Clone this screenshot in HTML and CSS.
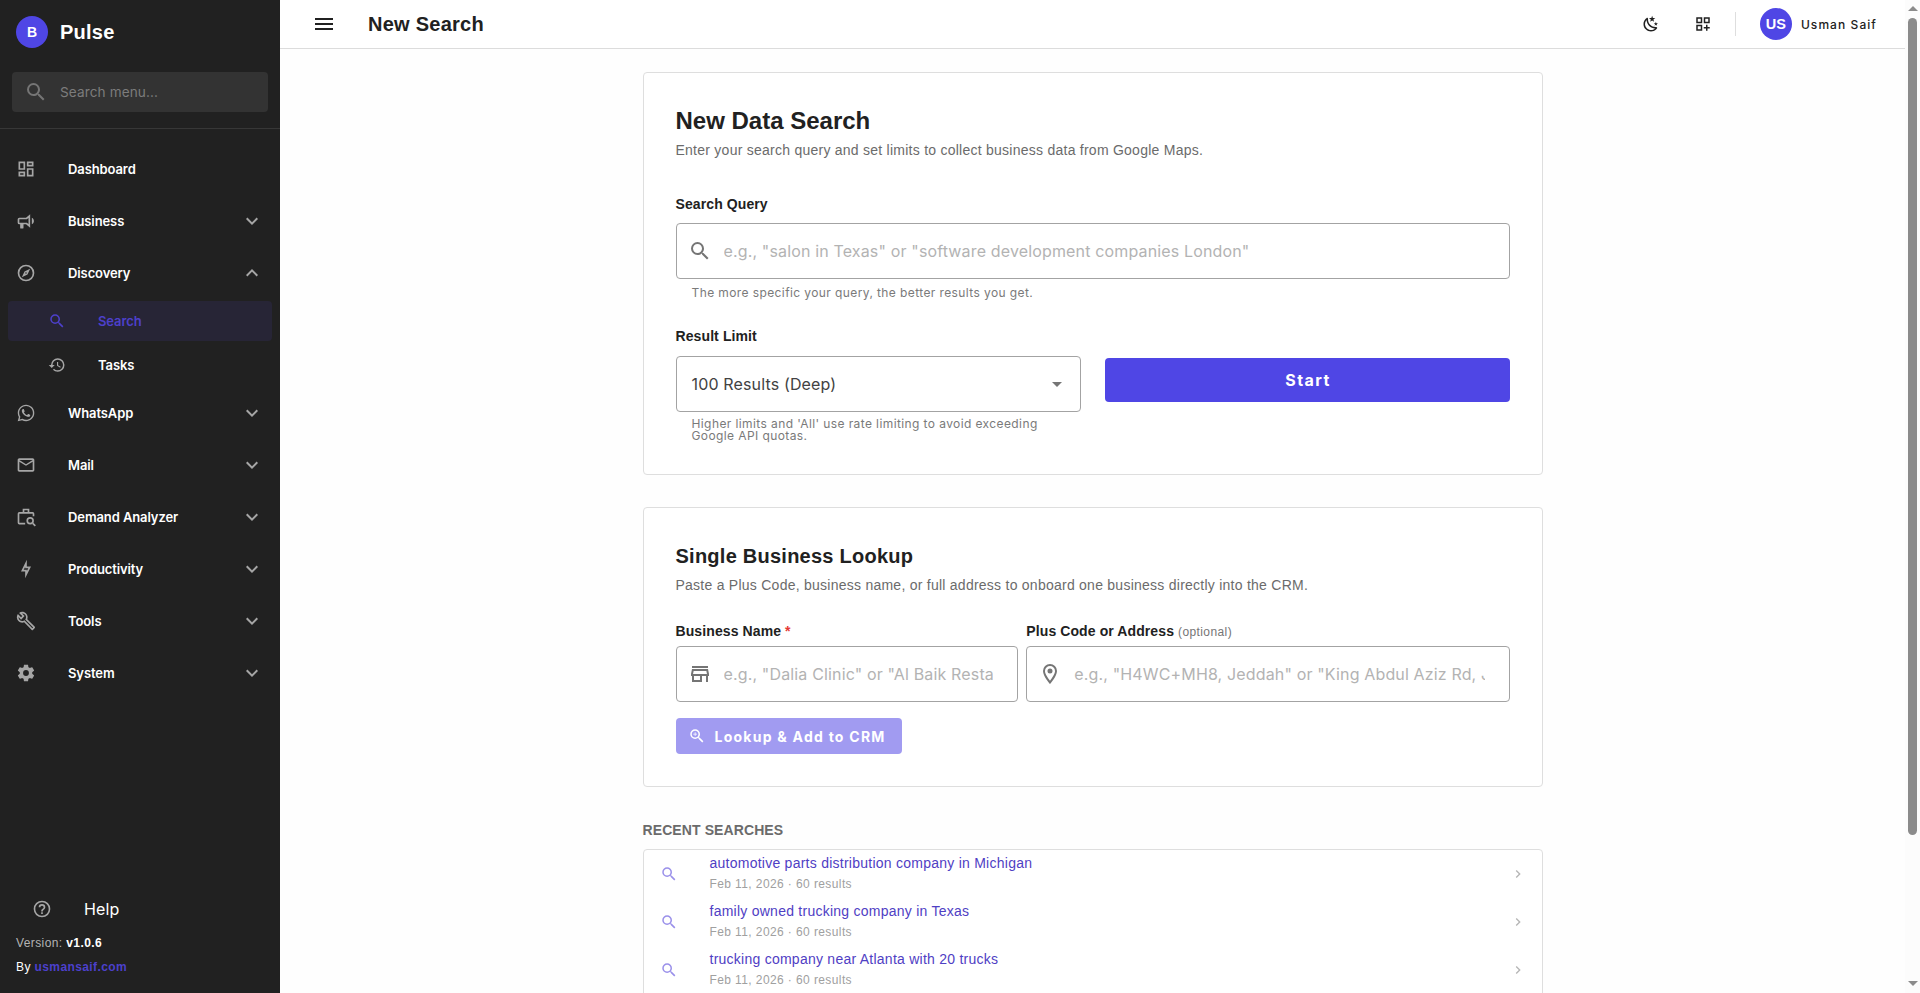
FILE: index.html
```html
<!DOCTYPE html>
<html lang="en">
<head>
  <meta charset="UTF-8">
  <meta name="viewport" content="width=device-width, initial-scale=1.0">
  <title>New Search - Pulse</title>
  <link rel="stylesheet" href="styles.css">
</head>
<body>
  <svg class="sprite">
    <symbol id="magnify" viewBox="0 0 24 24"><path d="M9.5,3A6.5,6.5 0 0,1 16,9.5C16,11.11 15.41,12.59 14.44,13.73L14.71,14H15.5L20.5,19L19,20.5L14,15.5V14.71L13.73,14.44C12.59,15.41 11.11,16 9.5,16A6.5,6.5 0 0,1 3,9.5A6.5,6.5 0 0,1 9.5,3M9.5,5C7,5 5,7 5,9.5C5,12 7,14 9.5,14C12,14 14,12 14,9.5C14,7 12,5 9.5,5Z"/></symbol>
    <symbol id="magnify-plus" viewBox="0 0 24 24"><path d="M9.5,3A6.5,6.5 0 0,1 16,9.5C16,11.11 15.41,12.59 14.44,13.73L14.71,14H15.5L20.5,19L19,20.5L14,15.5V14.71L13.73,14.44C12.59,15.41 11.11,16 9.5,16A6.5,6.5 0 0,1 3,9.5A6.5,6.5 0 0,1 9.5,3M9.5,5C7,5 5,7 5,9.5C5,12 7,14 9.5,14C12,14 14,12 14,9.5C14,7 12,5 9.5,5Z"/><path d="M7,9H9V7H10V9H12V10H10V12H9V10H7V9Z"/></symbol>
    <symbol id="dashboard" viewBox="0 0 24 24"><path d="M19,5V7H15V5H19M9,5V11H5V5H9M19,13V19H15V13H19M9,17V19H5V17H9M21,3H13V9H21V3M11,3H3V13H11V3M21,11H13V21H21V11M11,15H3V21H11V15Z"/></symbol>
    <symbol id="bullhorn" viewBox="0 0 24 24"><path d="M12,8H4A2,2 0 0,0 2,10V14A2,2 0 0,0 4,16H5V20A1,1 0 0,0 6,21H8A1,1 0 0,0 9,20V16H12L17,20V4L12,8M15,15.6L13,14H4V10H13L15,8.4V15.6M21.5,12C21.5,13.71 20.54,15.26 19,16V8C20.53,8.75 21.5,10.3 21.5,12Z"/></symbol>
    <symbol id="compass" viewBox="0 0 24 24"><path d="M7,17L10.2,10.2L17,7L13.8,13.8L7,17M12,11.1A0.9,0.9 0 0,0 11.1,12A0.9,0.9 0 0,0 12,12.9A0.9,0.9 0 0,0 12.9,12A0.9,0.9 0 0,0 12,11.1M12,2A10,10 0 0,1 22,12A10,10 0 0,1 12,22A10,10 0 0,1 2,12A10,10 0 0,1 12,2M12,4A8,8 0 0,0 4,12A8,8 0 0,0 12,20A8,8 0 0,0 20,12A8,8 0 0,0 12,4Z"/></symbol>
    <symbol id="history" viewBox="0 0 24 24"><path d="M13.5,8H12V13L16.28,15.54L17,14.33L13.5,12.25V8M13,3A9,9 0 0,0 4,12H1L4.96,16.03L9,12H6A7,7 0 0,1 13,5A7,7 0 0,1 20,12A7,7 0 0,1 13,19C11.07,19 9.32,18.21 8.06,16.94L6.64,18.36C8.27,20 10.5,21 13,21A9,9 0 0,0 22,12A9,9 0 0,0 13,3"/></symbol>
    <symbol id="whatsapp" viewBox="0 0 24 24"><path d="M12.04 2C6.58 2 2.13 6.45 2.13 11.91C2.13 13.66 2.59 15.36 3.45 16.86L2.05 22L7.3 20.62C8.75 21.41 10.38 21.83 12.04 21.83C17.5 21.83 21.95 17.38 21.95 11.92C21.95 9.27 20.92 6.78 19.05 4.91C17.18 3.03 14.69 2 12.04 2M12.05 3.67C14.25 3.67 16.31 4.53 17.87 6.09C19.42 7.65 20.28 9.72 20.28 11.92C20.28 16.46 16.58 20.15 12.04 20.15C10.56 20.15 9.11 19.76 7.85 19L7.55 18.83L4.43 19.65L5.26 16.61L5.06 16.29C4.24 15 3.8 13.47 3.8 11.91C3.81 7.37 7.5 3.67 12.05 3.67M8.53 7.33C8.37 7.33 8.1 7.39 7.87 7.64C7.65 7.89 7 8.5 7 9.71C7 10.93 7.89 12.1 8 12.27C8.14 12.44 9.76 14.94 12.25 16C12.84 16.27 13.3 16.42 13.66 16.53C14.25 16.72 14.79 16.69 15.22 16.63C15.7 16.56 16.68 16.03 16.89 15.45C17.1 14.87 17.1 14.38 17.04 14.27C16.97 14.17 16.81 14.11 16.56 14C16.31 13.86 15.09 13.26 14.87 13.18C14.64 13.1 14.5 13.06 14.31 13.3C14.15 13.55 13.67 14.11 13.53 14.27C13.38 14.44 13.24 14.46 13 14.34C12.74 14.21 11.94 13.95 11 13.11C10.26 12.45 9.77 11.64 9.62 11.39C9.5 11.15 9.61 11 9.73 10.89C9.84 10.78 10 10.6 10.1 10.45C10.23 10.31 10.27 10.2 10.35 10.04C10.43 9.87 10.39 9.73 10.33 9.61C10.27 9.5 9.77 8.26 9.56 7.77C9.36 7.29 9.16 7.35 9 7.34C8.86 7.34 8.7 7.33 8.53 7.33Z"/></symbol>
    <symbol id="email" viewBox="0 0 24 24"><path d="M22 6C22 4.9 21.1 4 20 4H4C2.9 4 2 4.9 2 6V18C2 19.1 2.9 20 4 20H20C21.1 20 22 19.1 22 18V6M20 6L12 11L4 6H20M20 18H4V8L12 13L20 8V18Z"/></symbol>
    <symbol id="briefcase-search" viewBox="0 0 24 24"><path fill="none" stroke="currentColor" stroke-width="2" d="M11,20H4A1,1 0 0,1 3,19V8A1,1 0 0,1 4,7H20A1,1 0 0,1 21,8V11M9,7V3H15V7"/><circle cx="17" cy="16.5" r="3.5" fill="none" stroke="currentColor" stroke-width="2"/><path d="M19.4,20.3L20.8,18.9L23.9,22L22.5,23.4Z"/></symbol>
    <symbol id="bolt" viewBox="0 0 24 24"><path d="M11 9.47V11H14.76L13 14.53V13H9.24L11 9.47M13 1L6 15H11V23L18 9H13V1Z"/></symbol>
    <symbol id="wrench" viewBox="0 0 24 24"><path d="M22.61,19L13.53,9.91C14.46,7.57 14,4.81 12.09,2.91C9.79,0.61 6.21,0.4 3.66,2.26L7.5,6.11L6.08,7.52L2.25,3.69C0.39,6.23 0.6,9.82 2.9,12.11C4.76,13.97 7.47,14.46 9.79,13.59L18.9,22.7C19.29,23.09 19.92,23.09 20.31,22.7L22.61,20.4C23,20 23,19.39 22.61,19M19.61,20.59L10.15,11.13C9.54,11.58 8.86,11.85 8.15,11.95C6.79,12.15 5.36,11.74 4.32,10.7C3.37,9.76 2.93,8.5 3,7.26L6.09,10.35L10.33,6.11L7.24,3C8.48,2.95 9.73,3.39 10.68,4.33C11.76,5.41 12.17,6.9 11.92,8.29C11.8,9 11.5,9.66 11.04,10.25L20.5,19.7L19.61,20.59Z"/></symbol>
    <symbol id="cog" viewBox="0 0 24 24"><path d="M12,15.5A3.5,3.5 0 0,1 8.5,12A3.5,3.5 0 0,1 12,8.5A3.5,3.5 0 0,1 15.5,12A3.5,3.5 0 0,1 12,15.5M19.43,12.97C19.47,12.65 19.5,12.33 19.5,12C19.5,11.67 19.47,11.34 19.43,11L21.54,9.37C21.73,9.22 21.78,8.95 21.66,8.73L19.66,5.27C19.54,5.05 19.27,4.96 19.05,5.05L16.56,6.05C16.04,5.66 15.5,5.32 14.87,5.07L14.5,2.42C14.46,2.18 14.25,2 14,2H10C9.75,2 9.54,2.18 9.5,2.42L9.13,5.07C8.5,5.32 7.96,5.66 7.44,6.05L4.95,5.05C4.73,4.96 4.46,5.05 4.34,5.27L2.34,8.73C2.21,8.95 2.27,9.22 2.46,9.37L4.57,11C4.53,11.34 4.5,11.67 4.5,12C4.5,12.33 4.53,12.65 4.57,12.97L2.46,14.63C2.27,14.78 2.21,15.05 2.34,15.27L4.34,18.73C4.46,18.95 4.73,19.03 4.95,18.95L7.44,17.94C7.96,18.34 8.5,18.68 9.13,18.93L9.5,21.58C9.54,21.82 9.75,22 10,22H14C14.25,22 14.46,21.82 14.5,21.58L14.87,18.93C15.5,18.67 16.04,18.34 16.56,17.94L19.05,18.95C19.27,19.03 19.54,18.95 19.66,18.73L21.66,15.27C21.78,15.05 21.73,14.78 21.54,14.63L19.43,12.97Z"/></symbol>
    <symbol id="help" viewBox="0 0 24 24"><path d="M11,18H13V16H11V18M12,2A10,10 0 0,0 2,12A10,10 0 0,0 12,22A10,10 0 0,0 22,12A10,10 0 0,0 12,2M12,20C7.59,20 4,16.41 4,12C4,7.59 7.59,4 12,4C16.41,4 20,7.59 20,12C20,16.41 16.41,20 12,20M12,6A4,4 0 0,0 8,10H10A2,2 0 0,1 12,8A2,2 0 0,1 14,10C14,12 11,11.75 11,15H13C13,12.75 16,12.5 16,10A4,4 0 0,0 12,6Z"/></symbol>
    <symbol id="menu" viewBox="0 0 24 24"><path d="M3,6H21V8H3V6M3,11H21V13H3V11M3,16H21V18H3V16Z"/></symbol>
    <symbol id="chevron-down" viewBox="0 0 24 24"><path d="M7.41,8.58L12,13.17L16.59,8.58L18,10L12,16L6,10L7.41,8.58Z"/></symbol>
    <symbol id="chevron-up" viewBox="0 0 24 24"><path d="M7.41,15.41L12,10.83L16.59,15.41L18,14L12,8L6,14L7.41,15.41Z"/></symbol>
    <symbol id="chevron-right" viewBox="0 0 24 24"><path d="M8.59,16.58L13.17,12L8.59,7.41L10,6L16,12L10,18L8.59,16.58Z"/></symbol>
    <symbol id="menu-down" viewBox="0 0 24 24"><path d="M7,10L12,15L17,10H7Z"/></symbol>
    <symbol id="night" viewBox="0 0 24 24"><path d="M17.75,4.09L15.22,6.03L16.13,9.09L13.5,7.28L10.87,9.09L11.78,6.03L9.25,4.09L12.44,4L13.5,1L14.56,4L17.75,4.09M21.25,11L19.61,12.25L20.2,14.23L18.5,13.06L16.8,14.23L17.39,12.25L15.75,11L17.81,10.95L18.5,9L19.19,10.95L21.25,11M18.97,15.95C19.8,15.87 20.69,17.05 20.16,17.8C19.84,18.25 19.5,18.67 19.08,19.07C15.17,23 8.84,23 4.94,19.07C1.03,15.17 1.03,8.83 4.94,4.93C5.34,4.53 5.76,4.17 6.21,3.85C6.96,3.32 8.14,4.21 8.06,5.04C7.79,7.9 8.75,10.87 10.95,13.06C13.14,15.26 16.1,16.22 18.97,15.95M17.33,17.97C14.5,17.81 11.7,16.64 9.53,14.5C7.36,12.31 6.2,9.5 6.04,6.68C3.23,9.82 3.34,14.64 6.35,17.66C9.37,20.67 14.19,20.78 17.33,17.97Z"/></symbol>
    <symbol id="grid-plus" viewBox="0 0 24 24"><path fill-rule="evenodd" d="M3,21H11V13H3ZM5,15H9V19H5ZM3,11H11V3H3ZM5,5H9V9H5ZM13,3V11H21V3ZM19,9H15V5H19ZM18,16V13H16V16H13V18H16V21H18V18H21V16Z"/></symbol>
    <symbol id="store" viewBox="0 0 24 24"><path d="M18.36 9L18.96 12H5.04L5.64 9H18.36M20 4H4V6H20V4M20 7H4L3 12V14H4V20H14V14H18V20H20V14H21V12L20 7M6 18V14H12V18H6Z"/></symbol>
    <symbol id="marker" viewBox="0 0 24 24"><path d="M12,6.5A2.5,2.5 0 0,1 14.5,9A2.5,2.5 0 0,1 12,11.5A2.5,2.5 0 0,1 9.5,9A2.5,2.5 0 0,1 12,6.5M12,2A7,7 0 0,1 19,9C19,14.25 12,22 12,22C12,22 5,14.25 5,9A7,7 0 0,1 12,2M12,4A5,5 0 0,0 7,9C7,10 7,12 12,18.71C17,12 17,10 17,9A5,5 0 0,0 12,4Z"/></symbol>
  </svg>

  <div class="app">
    <aside class="sidebar">
      <div class="brand">
        <span class="avatar brand-avatar">B</span>
        <span class="brand-name">Pulse</span>
      </div>
      <div class="menu-search">
        <svg class="icon icon-24"><use href="#magnify"/></svg>
        <input type="text" placeholder="Search menu...">
      </div>
      <nav class="nav">
        <a class="nav-item"><svg class="icon"><use href="#dashboard"/></svg><span>Dashboard</span></a>
        <a class="nav-item"><svg class="icon"><use href="#bullhorn"/></svg><span>Business</span><svg class="icon chevron"><use href="#chevron-down"/></svg></a>
        <a class="nav-item"><svg class="icon"><use href="#compass"/></svg><span>Discovery</span><svg class="icon chevron"><use href="#chevron-up"/></svg></a>
        <a class="nav-item sub active"><svg class="icon"><use href="#magnify"/></svg><span>Search</span></a>
        <a class="nav-item sub"><svg class="icon"><use href="#history"/></svg><span>Tasks</span></a>
        <a class="nav-item"><svg class="icon"><use href="#whatsapp"/></svg><span>WhatsApp</span><svg class="icon chevron"><use href="#chevron-down"/></svg></a>
        <a class="nav-item"><svg class="icon"><use href="#email"/></svg><span>Mail</span><svg class="icon chevron"><use href="#chevron-down"/></svg></a>
        <a class="nav-item"><svg class="icon"><use href="#briefcase-search"/></svg><span>Demand Analyzer</span><svg class="icon chevron"><use href="#chevron-down"/></svg></a>
        <a class="nav-item"><svg class="icon"><use href="#bolt"/></svg><span>Productivity</span><svg class="icon chevron"><use href="#chevron-down"/></svg></a>
        <a class="nav-item"><svg class="icon"><use href="#wrench"/></svg><span>Tools</span><svg class="icon chevron"><use href="#chevron-down"/></svg></a>
        <a class="nav-item"><svg class="icon"><use href="#cog"/></svg><span>System</span><svg class="icon chevron"><use href="#chevron-down"/></svg></a>
      </nav>
      <div class="sidebar-footer">
        <a class="help"><svg class="icon"><use href="#help"/></svg><span>Help</span></a>
        <div class="version">Version: <b>v1.0.6</b></div>
        <div class="author">By <a>usmansaif.com</a></div>
      </div>
    </aside>

    <div class="page">
      <header class="topbar">
        <svg class="icon icon-24"><use href="#menu"/></svg>
        <h1>New Search</h1>
        <div class="topbar-actions">
          <svg class="icon icon-18"><use href="#night"/></svg>
          <svg class="icon icon-18"><use href="#grid-plus"/></svg>
          <span class="divider"></span>
          <span class="avatar user-avatar">US</span>
          <span class="user-name">Usman Saif</span>
        </div>
      </header>

      <main class="content">
        <section class="card">
          <h2>New Data Search</h2>
          <p class="subtitle">Enter your search query and set limits to collect business data from Google Maps.</p>
          <label class="label query-label">Search Query</label>
          <div class="field">
            <svg class="icon icon-24"><use href="#magnify"/></svg>
            <input type="text" placeholder='e.g., "salon in Texas" or "software development companies London"'>
          </div>
          <p class="hint">The more specific your query, the better results you get.</p>
          <label class="label limit-label">Result Limit</label>
          <div class="limit-row">
            <div>
              <div class="field select">
                <span>100 Results (Deep)</span>
                <svg class="icon icon-24"><use href="#menu-down"/></svg>
              </div>
              <p class="hint">Higher limits and 'All' use rate limiting to avoid exceeding Google API quotas.</p>
            </div>
            <button class="btn btn-start">Start</button>
          </div>
        </section>

        <section class="card lookup">
          <h3>Single Business Lookup</h3>
          <p class="subtitle">Paste a Plus Code, business name, or full address to onboard one business directly into the CRM.</p>
          <div class="lookup-row">
            <div>
              <label class="label">Business Name <span class="required">*</span></label>
              <div class="field">
                <svg class="icon icon-24"><use href="#store"/></svg>
                <input type="text" placeholder='e.g., "Dalia Clinic" or "Al Baik Restaurant"'>
              </div>
            </div>
            <div>
              <label class="label">Plus Code or Address <span class="optional">(optional)</span></label>
              <div class="field">
                <svg class="icon icon-24"><use href="#marker"/></svg>
                <input type="text" placeholder='e.g., "H4WC+MH8, Jeddah" or "King Abdul Aziz Rd, Jeddah"'>
              </div>
            </div>
          </div>
          <button class="btn btn-lookup" disabled><svg class="icon icon-18"><use href="#magnify-plus"/></svg>Lookup &amp; Add to CRM</button>
        </section>

        <h4 class="recent-title">RECENT SEARCHES</h4>
        <div class="recent-list">
          <a class="recent-item">
            <svg class="icon icon-18"><use href="#magnify"/></svg>
            <div><div class="recent-name">automotive parts distribution company in Michigan</div><div class="recent-meta">Feb 11, 2026 · 60 results</div></div>
            <svg class="icon arrow"><use href="#chevron-right"/></svg>
          </a>
          <a class="recent-item">
            <svg class="icon icon-18"><use href="#magnify"/></svg>
            <div><div class="recent-name">family owned trucking company in Texas</div><div class="recent-meta">Feb 11, 2026 · 60 results</div></div>
            <svg class="icon arrow"><use href="#chevron-right"/></svg>
          </a>
          <a class="recent-item">
            <svg class="icon icon-18"><use href="#magnify"/></svg>
            <div><div class="recent-name">trucking company near Atlanta with 20 trucks</div><div class="recent-meta">Feb 11, 2026 · 60 results</div></div>
            <svg class="icon arrow"><use href="#chevron-right"/></svg>
          </a>
        </div>
      </main>
    </div>

    <div class="scrollbar">
      <span class="scroll-up"></span>
      <span class="scroll-thumb"></span>
      <span class="scroll-down"></span>
    </div>
  </div>
</body>
</html>
```
FILE: styles.css
```css
* {
  box-sizing: border-box;
}
body {
  margin: 0;
  font-family: "Liberation Sans", Arial, sans-serif;
  color: #212121;
  background-color: #fefefe;
  overflow: hidden;
}
h1, h2, h3, h4, p {
  margin: 0;
}
input {
  flex: 1;
  min-width: 0;
  padding: 0;
  border: none;
  outline: none;
  background: none;
}
.sprite {
  display: none;
}
.icon {
  width: 20px;
  height: 20px;
  fill: currentColor;
  flex-shrink: 0;
}
.icon-24 {
  width: 24px;
  height: 24px;
}
.icon-18 {
  width: 18px;
  height: 18px;
}
.app {
  display: flex;
  height: 993px;
}

/* Sidebar */
.sidebar {
  width: 280px;
  display: flex;
  flex-direction: column;
  background-color: #212121;
  color: #fff;
}
.brand {
  display: flex;
  align-items: center;
  gap: 12px;
  height: 64px;
  padding: 0 16px;
}
.avatar {
  width: 32px;
  height: 32px;
  border-radius: 50%;
  background-color: #4f46e5;
  color: #fff;
  font-size: 14px;
  font-weight: bold;
  line-height: 32px;
  text-align: center;
  flex-shrink: 0;
}
.brand-name {
  font-size: 20px;
  font-weight: bold;
  letter-spacing: 0.25px;
}
.menu-search {
  display: flex;
  align-items: center;
  gap: 12px;
  height: 40px;
  margin: 8px 12px 16px;
  padding: 0 12px;
  border-radius: 4px;
  background-color: #333;
  color: #757575;
}
.menu-search input {
  padding-bottom: 1px;
  font: 13.6px Inter, sans-serif;
  letter-spacing: 0.1px;
}
.menu-search input::placeholder {
  color: #7c7c7c;
}
.nav {
  padding: 16px 8px 0;
  border-top: 1px solid #373737;
}
.nav-item {
  display: flex;
  align-items: center;
  gap: 32px;
  height: 48px;
  margin-bottom: 4px;
  padding: 0 8px;
  font: 600 13px Inter, sans-serif;
  letter-spacing: -0.1px;
  border-radius: 4px;
}
.nav-item .icon {
  color: #a6a6a6;
}
.nav-item .chevron {
  width: 24px;
  height: 24px;
  margin-left: auto;
}
.nav-item.sub {
  height: 40px;
  padding-left: 40px;
}
.nav-item.sub .icon {
  width: 18px;
  height: 18px;
}
.nav-item.active, .nav-item.active .icon {
  color: #4d40cb;
}
.nav-item.active {
  background-color: #272536;
}
.sidebar-footer {
  margin-top: auto;
  padding: 0 16px 12px;
  font-size: 12px;
  letter-spacing: 0.4px;
}
.help {
  display: flex;
  align-items: center;
  gap: 32px;
  height: 48px;
  padding-left: 16px;
  font: 16px Inter, sans-serif;
  letter-spacing: 0.15px;
}
.help .icon {
  color: #a6a6a6;
}
.version, .author {
  height: 24px;
  line-height: 20px;
}
.version {
  color: #b4b4b4;
}
.version b {
  color: #fff;
}
.author a {
  color: #4c40cc;
  font-weight: bold;
}

/* Top bar */
.page {
  flex: 1;
  min-width: 0;
  overflow: hidden;
}
.topbar {
  display: flex;
  align-items: center;
  height: 49px;
  padding: 0 28px 0 32px;
  border-bottom: 1px solid #dcdcdc;
  background-color: #fff;
}
.topbar h1 {
  margin-left: 32px;
  font-size: 20px;
  letter-spacing: 0.25px;
}
.topbar-actions {
  display: flex;
  align-items: center;
  margin-left: auto;
}
.topbar-actions .icon {
  margin-right: 34px;
}
.divider {
  width: 1px;
  height: 24px;
  margin: 0 24px 0 -11px;
  background-color: #dedede;
}
.user-avatar {
  font-size: 14.5px;
}
.user-name {
  margin-left: 9px;
  font: 500 12px Inter, sans-serif;
  letter-spacing: 1.07px;
}

/* Content */
.content {
  width: 900px;
  margin: 23px auto 0;
}
.card {
  height: 403px;
  padding: 32px;
  border: 1px solid #dedede;
  border-radius: 4px;
  background-color: #fff;
}
.card h2 {
  font-size: 24px;
  line-height: 32px;
}
.card h3 {
  font-size: 20px;
  line-height: 32px;
  letter-spacing: 0.25px;
}
.subtitle {
  margin-top: 3px;
  font-size: 14px;
  line-height: 20px;
  letter-spacing: 0.25px;
  color: #6b6b6b;
}
.label {
  display: block;
  height: 22px;
  font-size: 14px;
  font-weight: bold;
  line-height: 22px;
  letter-spacing: 0.1px;
}
.query-label {
  margin-top: 33px;
  margin-bottom: 8px;
}
.limit-label {
  margin-top: 26px;
  margin-bottom: 9px;
}
.field {
  display: flex;
  align-items: center;
  gap: 12px;
  height: 56px;
  padding: 0 24px 0 11px;
  border: 1px solid #a3a3a3;
  border-radius: 4px;
  color: #757575;
}
.field input, .select {
  font: 16px Inter, sans-serif;
  letter-spacing: 0.15px;
}
.field input::placeholder {
  color: #b3b3b3;
}
.select {
  justify-content: space-between;
  padding: 0 11px 0 15px;
}
.select span {
  color: #424242;
}
.hint {
  padding: 8px 16px 0;
  font: 12px/12px Inter, sans-serif;
  letter-spacing: 0.4px;
  color: #7a7a7a;
}
.limit-row {
  display: grid;
  grid-template-columns: 1fr 1fr;
  gap: 24px;
}
.limit-row .hint {
  padding-top: 6px;
}
.btn {
  border: none;
  border-radius: 4px;
  background-color: #4f46e5;
  color: #fff;
  font: bold 14px Inter, sans-serif;
}
.btn-start {
  height: 44px;
  margin-top: 2px;
  padding-left: 8px;
  font-size: 16px;
  letter-spacing: 1.43px;
}
.lookup {
  height: 280px;
  margin-top: 32px;
}
.lookup-row {
  display: grid;
  grid-template-columns: 342.8px 1fr;
  gap: 8px;
  margin-top: 25px;
}
.lookup-row .label {
  margin-bottom: 4px;
}
.required {
  color: #e53935;
}
.optional {
  font-size: 12px;
  font-weight: normal;
  letter-spacing: 0.4px;
  color: #757575;
}
.btn-lookup {
  display: flex;
  align-items: center;
  gap: 9px;
  height: 36px;
  margin-top: 16px;
  padding: 0 16px 0 12px;
  background-color: #a19bf1;
  letter-spacing: 1.25px;
}

/* Recent searches */
.recent-title {
  margin-top: 32px;
  font-size: 14px;
  line-height: 22px;
  letter-spacing: 0.1px;
  color: #6b6b6b;
}
.recent-list {
  height: 240px;
  margin-top: 8px;
  border: 1px solid #dedede;
  border-radius: 4px;
  background-color: #fff;
}
.recent-item {
  display: flex;
  align-items: center;
  gap: 32px;
  height: 48px;
  padding: 0 16px;
  color: #9a90ea;
}
.recent-name {
  font-size: 14px;
  line-height: 18px;
  padding-bottom: 2px;
  letter-spacing: 0.25px;
  color: #4f40c4;
}
.recent-meta {
  font-size: 12px;
  line-height: 20px;
  letter-spacing: 0.4px;
  color: #a0a0a0;
}
.recent-item .arrow {
  width: 16px;
  height: 16px;
  margin-left: auto;
  color: #b5b5b5;
}

/* Scrollbar */
.scrollbar {
  width: 15px;
  display: flex;
  flex-direction: column;
  align-items: center;
  padding: 6px 0 7px;
  background-color: #fcfcfc;
}
.scroll-up, .scroll-down {
  border-left: 5px solid transparent;
  border-right: 5px solid transparent;
}
.scroll-up {
  border-bottom: 5px solid #8b8b8b;
}
.scroll-down {
  margin-top: auto;
  border-top: 5px solid #8b8b8b;
}
.scroll-thumb {
  width: 9px;
  height: 817px;
  margin-top: 7px;
  border-radius: 5px;
  background-color: #8b8b8b;
}
```
